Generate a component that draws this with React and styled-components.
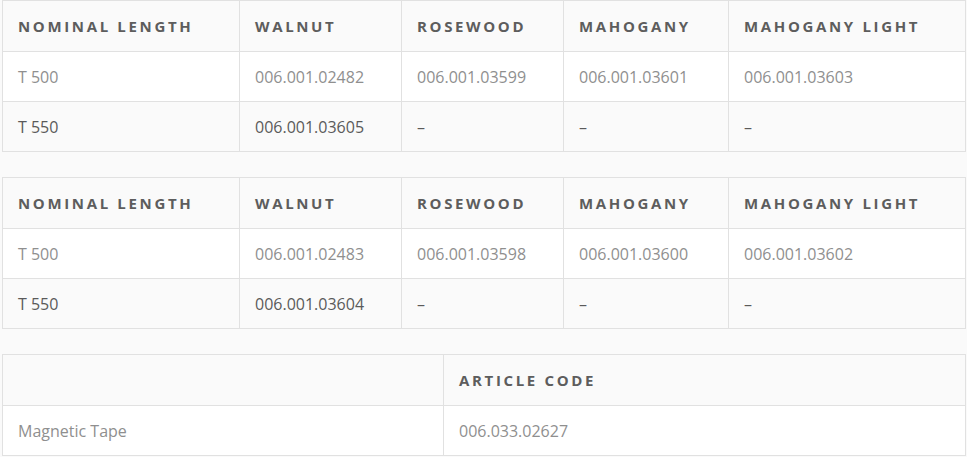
import React from "react";
import styled, { createGlobalStyle } from "styled-components";

const Global = createGlobalStyle`
  html, body { margin: 0; padding: 0; background: #fafafa; }
  body { font-family: "Open Sans", "Liberation Sans", sans-serif; }
`;

const Page = styled.div`
  display: flex;
  flex-direction: column;
  gap: 25px;
  padding: 0 2px 0 2px;
  width: 963px;
`;

const Table = styled.table`
  width: 963px;
  border-collapse: collapse;
  table-layout: fixed;
`;

const HeadCell = styled.th`
  height: 51px;
  padding: 0 15px;
  border: 1px solid #e1e1e1;
  background: #fafafa;
  text-align: left;
  font-size: 15px;
  font-weight: 700;
  letter-spacing: 2.65px;
  text-transform: uppercase;
  color: #5d5d5d;
  white-space: nowrap;
  box-sizing: border-box;
`;

const Row = styled.tr`
  background: ${(p) => (p.$alt ? "#fafafa" : "#ffffff")};
`;

const Cell = styled.td`
  height: 50px;
  padding: 0 15px;
  border: 1px solid #e1e1e1;
  font-size: 16px;
  font-weight: 400;
  color: ${(p) => (p.$alt ? "#5a5a5a" : "#8f8f8f")};
  white-space: nowrap;
  box-sizing: border-box;
`;

const woodCols = [237, 162, 162, 165, 237];
const woodHead = ["Nominal Length", "Walnut", "Rosewood", "Mahogany", "Mahogany Light"];

const tables = [
  [
    ["T 500", "006.001.02482", "006.001.03599", "006.001.03601", "006.001.03603"],
    ["T 550", "006.001.03605", "–", "–", "–"],
  ],
  [
    ["T 500", "006.001.02483", "006.001.03598", "006.001.03600", "006.001.03602"],
    ["T 550", "006.001.03604", "–", "–", "–"],
  ],
];

function DataTable({ cols, head, rows }) {
  return (
    <Table>
      <colgroup>
        {cols.map((w, i) => (
          <col key={i} style={{ width: w }} />
        ))}
      </colgroup>
      <thead>
        <tr>
          {head.map((h, i) => (
            <HeadCell key={i}>{h}</HeadCell>
          ))}
        </tr>
      </thead>
      <tbody>
        {rows.map((r, ri) => (
          <Row key={ri} $alt={ri % 2 === 1}>
            {r.map((c, ci) => (
              <Cell key={ci} $alt={ri % 2 === 1}>
                {c}
              </Cell>
            ))}
          </Row>
        ))}
      </tbody>
    </Table>
  );
}

export default function App() {
  return (
    <>
      <Global />
      <Page>
        {tables.map((rows, i) => (
          <DataTable key={i} cols={woodCols} head={woodHead} rows={rows} />
        ))}
        <DataTable
          cols={[441, 522]}
          head={["", "Article Code"]}
          rows={[["Magnetic Tape", "006.033.02627"]]}
        />
      </Page>
    </>
  );
}
